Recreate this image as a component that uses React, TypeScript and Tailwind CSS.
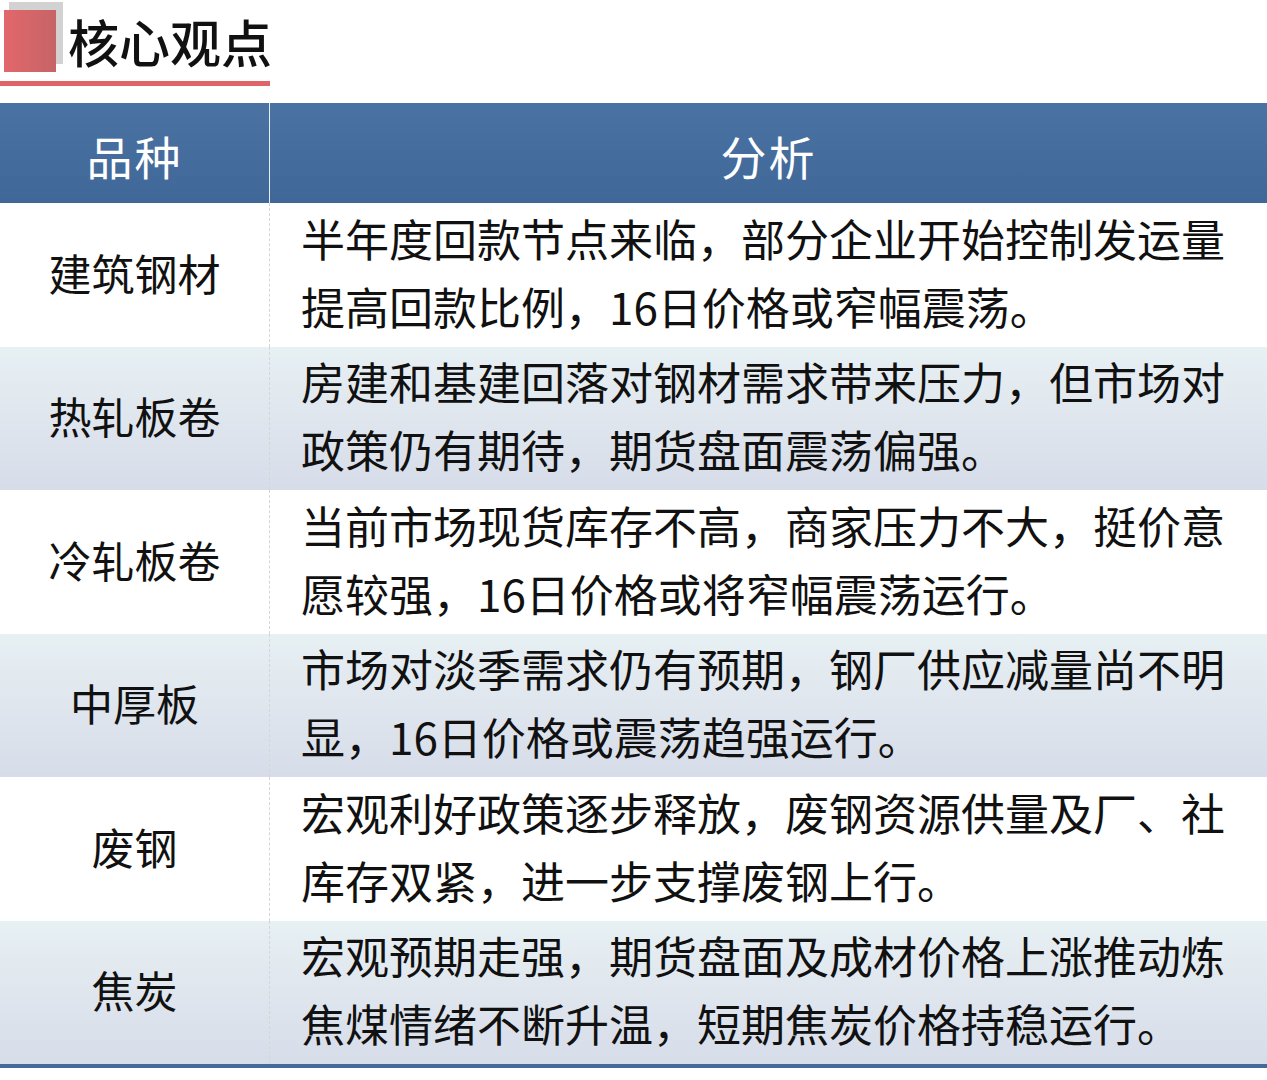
import React from 'react';

const rows = [
    { name: '建筑钢材', lines: ['半年度回款节点来临，部分企业开始控制发运量', '提高回款比例，16日价格或窄幅震荡。'] },
    { name: '热轧板卷', lines: ['房建和基建回落对钢材需求带来压力，但市场对', '政策仍有期待，期货盘面震荡偏强。'] },
    { name: '冷轧板卷', lines: ['当前市场现货库存不高，商家压力不大，挺价意', '愿较强，16日价格或将窄幅震荡运行。'] },
    { name: '中厚板', lines: ['市场对淡季需求仍有预期，钢厂供应减量尚不明', '显，16日价格或震荡趋强运行。'] },
    { name: '废钢', lines: ['宏观利好政策逐步释放，废钢资源供量及厂、社', '库存双紧，进一步支撑废钢上行。'] },
    { name: '焦炭', lines: ['宏观预期走强，期货盘面及成材价格上涨推动炼', '焦煤情绪不断升温，短期焦炭价格持稳运行。'] },
];

const font = { fontFamily: '"Noto Sans CJK SC", "Noto Sans", sans-serif' };

export default function App() {
    return (
        <div className="w-[1267px] h-[1080px] bg-white text-[#111]" style={font}>
            {/* title */}
            <div className="h-[103px] pt-[2px]">
                <div className="flex items-start h-[79px]">
                    <div className="relative w-[63px] h-[70px] ml-[4px] shrink-0">
                        <div className="absolute left-[5px] top-0 w-[54px] h-[62px] bg-[#d2d2d2]" />
                        <div className="absolute left-0 top-[8px] w-[52px] h-[62px] bg-gradient-to-r from-[#e2676b] to-[#c66466]" />
                    </div>
                    <div className="ml-[1px] mt-[9px] text-[51px] leading-[60px] font-medium">核心观点</div>
                </div>
                <div className="w-[270px] h-[5px] bg-[#e0636a]" />
            </div>

            {/* header */}
            <div className="flex h-[100px] bg-gradient-to-b from-[#4a72a3] to-[#3f6898] text-white">
                <div className="w-[269px] flex items-center justify-center pt-[4px] text-[46px] tracking-[2px]">品种</div>
                <div className="w-px bg-[#e8eef6]" />
                <div className="flex-1 flex items-center justify-center pt-[4px] text-[46px] tracking-[2px]">分析</div>
            </div>

            {/* body */}
            {rows.map((r, i) => (
                <div
                    key={r.name}
                    className={
                        i % 2 === 1
                            ? 'flex h-[143.5px] bg-gradient-to-b from-[#e7f0f3] via-[#dfe6ee] to-[#d6dde9]'
                            : 'flex h-[143.5px] bg-white'
                    }
                >
                    <div className="w-[269px] flex items-center justify-center pb-[6px] text-[43px]">{r.name}</div>
                    <div className="w-px border-l border-dashed border-[#d6d6d6]" />
                    <div className="flex-1 flex flex-col justify-center pl-[31px] pb-[6px] text-[44px] leading-[68px]">
                        {r.lines.map((l) => (
                            <div key={l} className="whitespace-nowrap">{l}</div>
                        ))}
                    </div>
                </div>
            ))}
            <div className="h-[4px] bg-[#426b9c]" />
        </div>
    );
}
